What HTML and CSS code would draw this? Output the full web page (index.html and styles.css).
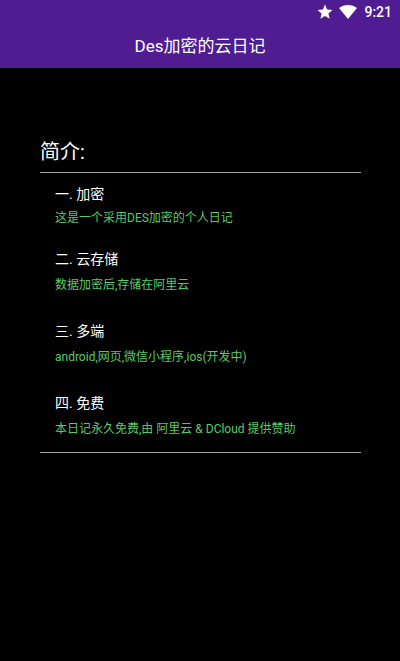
FILE: index.html
```html
<!DOCTYPE html>
<html lang="zh-CN">
<head>
    <meta charset="UTF-8" />
    <meta name="viewport" content="width=device-width, initial-scale=1.0">
    <title>Des加密的云日记</title>
    <link rel="stylesheet" href="styles.css">
</head>

<body>
    <header class="header">
        <div class="status-bar">
            <svg class="icon-star" viewBox="0 0 24 24" aria-hidden="true">
                <path d="M12 17.27L18.18 21l-1.64-7.03L22 9.24l-7.19-.61L12 2 9.19 8.63 2 9.24l5.46 4.73L5.82 21z" />
            </svg>
            <svg class="icon-wifi" viewBox="0 0 18 14" aria-hidden="true">
                <path d="M9 14L0 3C2.600 1 5.600 0 9 0s6.400 1 9 3z" />
            </svg>
            <span class="time">9:21</span>
        </div>
        <h1 class="title">Des加密的云日记</h1>
    </header>

    <main class="content">
        <h2 class="intro-title">简介:</h2>
        <div class="intro-list">
            <section class="intro-item">
                <h3>一. 加密</h3>
                <p>这是一个采用DES加密的个人日记</p>
            </section>
            <section class="intro-item">
                <h3>二. 云存储</h3>
                <p>数据加密后,存储在阿里云</p>
            </section>
            <section class="intro-item">
                <h3>三. 多端</h3>
                <p>android,网页,微信小程序,ios(开发中)</p>
            </section>
            <section class="intro-item">
                <h3>四. 免费</h3>
                <p>本日记永久免费,由 阿里云 &amp; DCloud 提供赞助</p>
            </section>
        </div>
    </main>
</body>
</html>
```
FILE: styles.css
```css
* {
    margin: 0;
    padding: 0;
    box-sizing: border-box;
}

body {
    font-family: Roboto, "Noto Sans CJK SC", sans-serif;
    background-color: #000;
    color: #fff;
    min-height: 100vh;
}

.header {
    background-color: #4f1d91;
}

.status-bar {
    display: flex;
    align-items: center;
    justify-content: flex-end;
    height: 24px;
    padding-right: 8px;
}

.icon-star {
    width: 18px;
    height: 18px;
    margin-right: 5px;
    fill: #fff;
}

.icon-wifi {
    width: 18px;
    height: 14px;
    margin-right: 7px;
    fill: #fff;
}

.time {
    font-size: 14px;
    font-weight: 500;
}

.title {
    height: 44px;
    line-height: 44px;
    font-size: 17px;
    font-weight: 400;
    text-align: center;
}

.content {
    padding: 68px 39px 0 40px;
}

.intro-title {
    height: 36px;
    line-height: 32px;
    font-size: 20px;
    font-weight: 400;
}

.intro-list {
    border-top: 1px solid #a4a4a4;
    border-bottom: 1px solid #a4a4a4;
    padding: 9px 15px 11px;
}

.intro-item {
    margin-bottom: 22px;
}

.intro-item:first-child {
    margin-bottom: 17px;
}

.intro-item:last-child {
    margin-bottom: 0;
}

.intro-item h3 {
    line-height: 24px;
    font-size: 14px;
    font-weight: 400;
}

.intro-item p {
    line-height: 24px;
    font-size: 12px;
    color: #5cc868;
}

.intro-item + .intro-item p {
    margin-top: 2px;
}
```
